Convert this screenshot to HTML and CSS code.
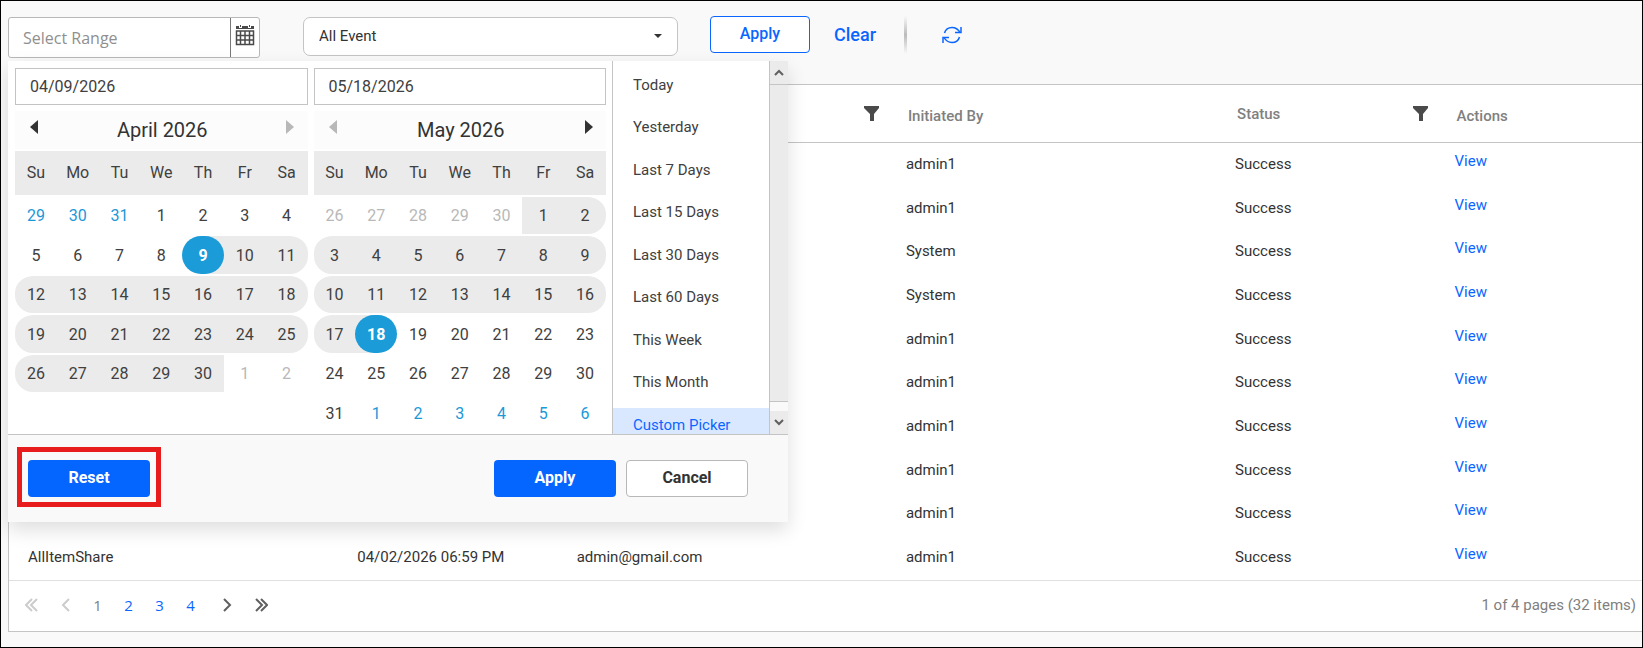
FILE: index.html
```html
<!DOCTYPE html>
<html lang="en">
<head>
    <meta charset="UTF-8">
    <meta name="viewport" content="width=device-width, initial-scale=1.0">
    <title>Export Logs</title>
    <link rel="stylesheet" href="styles.css">
</head>
<body>
    <div class="page">
        <div class="toolbar">
            <div class="range">
                <input type="text" class="range-input" placeholder="Select Range" aria-label="Select Range">
                <button type="button" class="range-button" aria-label="Open calendar">
                    <svg width="20" height="22" viewBox="0 0 20 22">
                        <path d="M1 5V2h3v2h3V2h6v2h3V2h3v3z" fill="#4a4a4a"/>
                        <path d="M5.500 1v2M14.500 1v2" stroke="#4a4a4a" stroke-width="1"/>
                        <path d="M1.500 7h17v13.500h-17zM1.500 11.500h17M1.500 16h17M5.500 7v13M10 7v13M14.500 7v13" fill="none" stroke="#4a4a4a" stroke-width="1.500"/>
                    </svg>
                </button>

                <!-- Date range popup -->
                <div class="popup">
                    <div class="popup-main">
                        <div class="calendars">
                            <div class="calendar">
                                <input type="text" class="date-input" value="04/09/2026" aria-label="Start date">
                                <div class="calendar-nav">
                                    <button type="button" class="arrow" aria-label="Previous month"><svg width="8" height="14" viewBox="0 0 8 14"><path d="M8 0v14L0 7z"/></svg></button>
                                    <span>April 2026</span>
                                    <button type="button" class="arrow" aria-label="Next month" disabled><svg width="8" height="14" viewBox="0 0 8 14"><path d="M0 0v14l8-7z"/></svg></button>
                                </div>
                                <table class="days" id="startMonth"></table>
                            </div>
                            <div class="calendar">
                                <input type="text" class="date-input" value="05/18/2026" aria-label="End date">
                                <div class="calendar-nav">
                                    <button type="button" class="arrow" aria-label="Previous month" disabled><svg width="8" height="14" viewBox="0 0 8 14"><path d="M8 0v14L0 7z"/></svg></button>
                                    <span>May 2026</span>
                                    <button type="button" class="arrow" aria-label="Next month"><svg width="8" height="14" viewBox="0 0 8 14"><path d="M0 0v14l8-7z"/></svg></button>
                                </div>
                                <table class="days" id="endMonth"></table>
                            </div>
                        </div>
                        <div class="presets">
                            <button type="button">Today</button>
                            <button type="button">Yesterday</button>
                            <button type="button">Last 7 Days</button>
                            <button type="button">Last 15 Days</button>
                            <button type="button">Last 30 Days</button>
                            <button type="button">Last 60 Days</button>
                            <button type="button">This Week</button>
                            <button type="button">This Month</button>
                            <button type="button" class="active">Custom Picker</button>
                        </div>
                        <div class="scroll">
                            <button type="button" class="scroll-up" aria-label="Scroll up"><svg width="10" height="7" viewBox="0 0 10 7"><path d="M1 6l4-4 4 4"/></svg></button>
                            <div class="scroll-thumb"></div>
                            <button type="button" class="scroll-down" aria-label="Scroll down"><svg width="10" height="7" viewBox="0 0 10 7"><path d="M1 1l4 4 4-4"/></svg></button>
                        </div>
                    </div>
                    <div class="popup-footer">
                        <div class="highlight">
                            <button type="button" class="btn btn-primary">Reset</button>
                        </div>
                        <div class="popup-actions">
                            <button type="button" class="btn btn-primary">Apply</button>
                            <button type="button" class="btn btn-cancel">Cancel</button>
                        </div>
                    </div>
                </div>
            </div>

            <div class="event">
                <select class="event-select" aria-label="Event">
                    <option>All Event</option>
                </select>
                <svg class="event-caret" width="8" height="4" viewBox="0 0 8 4"><path d="M0 0h8L4 4z" fill="#333"/></svg>
            </div>

            <button type="button" class="btn-apply">Apply</button>
            <button type="button" class="btn-clear">Clear</button>
            <span class="divider"></span>
            <button type="button" class="btn-refresh" aria-label="Refresh">
                <svg width="20" height="18" viewBox="0 0 20 18" fill="none" stroke="#0a66ff" stroke-width="1.500">
                    <path d="M2.500 7C3.500 3.500 6.500 1.500 10 1.500c3.500 0 6 1.500 8 5M17.500 11c-1 3.500-4 5.500-7.500 5.500-3.500 0-6-1.500-8-5"/>
                    <path d="M19 1v5.500h-6M1 17v-5.500h6"/>
                </svg>
            </button>
        </div>

        <div class="grid">
            <table class="logs">
                <colgroup>
                    <col class="wide"><col class="narrow"><col class="wide"><col class="wide"><col class="narrow"><col>
                </colgroup>
                <thead>
                    <tr>
                        <th></th>
                        <th></th>
                        <th><div class="th-filter"><span></span><svg width="15" height="15" viewBox="0 0 15 15"><path d="M0 0h15v2L10 8v7H6V8L0 2z" fill="#4a4a4a"/></svg></div></th>
                        <th>Initiated By</th>
                        <th><div class="th-filter"><span>Status</span><svg width="15" height="15" viewBox="0 0 15 15"><path d="M0 0h15v2L10 8v7H6V8L0 2z" fill="#4a4a4a"/></svg></div></th>
                        <th>Actions</th>
                    </tr>
                </thead>
                <tbody>
                    <tr><td></td><td></td><td></td><td>admin1</td><td>Success</td><td><a href="#">View</a></td></tr>
                    <tr><td></td><td></td><td></td><td>admin1</td><td>Success</td><td><a href="#">View</a></td></tr>
                    <tr><td></td><td></td><td></td><td>System</td><td>Success</td><td><a href="#">View</a></td></tr>
                    <tr><td></td><td></td><td></td><td>System</td><td>Success</td><td><a href="#">View</a></td></tr>
                    <tr><td></td><td></td><td></td><td>admin1</td><td>Success</td><td><a href="#">View</a></td></tr>
                    <tr><td></td><td></td><td></td><td>admin1</td><td>Success</td><td><a href="#">View</a></td></tr>
                    <tr><td></td><td></td><td></td><td>admin1</td><td>Success</td><td><a href="#">View</a></td></tr>
                    <tr><td></td><td></td><td></td><td>admin1</td><td>Success</td><td><a href="#">View</a></td></tr>
                    <tr><td></td><td></td><td></td><td>admin1</td><td>Success</td><td><a href="#">View</a></td></tr>
                    <tr><td>AllItemShare</td><td>04/02/2026 06:59 PM</td><td>admin@gmail.com</td><td>admin1</td><td>Success</td><td><a href="#">View</a></td></tr>
                </tbody>
            </table>

            <div class="pager">
                <div class="pager-links">
                    <button type="button" class="pager-nav" aria-label="First page" disabled><svg width="13" height="14" viewBox="0 0 13 14"><path d="M7 1L1 7l6 6M12 1L6 7l6 6"/></svg></button>
                    <button type="button" class="pager-nav" aria-label="Previous page" disabled><svg width="13" height="14" viewBox="0 0 13 14"><path d="M10 1L4 7l6 6"/></svg></button>
                    <div class="pager-pages">
                        <span class="pager-page">1</span>
                        <a href="#" class="pager-page">2</a>
                        <a href="#" class="pager-page">3</a>
                        <a href="#" class="pager-page">4</a>
                    </div>
                    <button type="button" class="pager-nav" aria-label="Next page"><svg width="13" height="14" viewBox="0 0 13 14"><path d="M3 1l6 6-6 6"/></svg></button>
                    <button type="button" class="pager-nav" aria-label="Last page"><svg width="13" height="14" viewBox="0 0 13 14"><path d="M1 1l6 6-6 6M6 1l6 6-6 6"/></svg></button>
                </div>
                <span class="pager-info">1 of 4 pages (32 items)</span>
            </div>
        </div>
    </div>

    <script>
        const start = new Date(2026, 3, 9);
        const end = new Date(2026, 4, 18);

        // side: 'start' is the left calendar, 'end' the right one
        function renderMonth(id, year, month, side) {
            const table = document.getElementById(id);
            const first = new Date(year, month, 1);
            const last = new Date(year, month + 1, 0);
            const weeks = Math.ceil((first.getDay() + last.getDate()) / 7);

            let html = '<thead><tr>';
            ['Su', 'Mo', 'Tu', 'We', 'Th', 'Fr', 'Sa'].forEach(name => {
                html += `<th scope="col">${name}</th>`;
            });
            html += '</tr></thead><tbody>';

            for (let w = 0; w < weeks; w++) {
                html += '<tr>';
                for (let d = 0; d < 7; d++) {
                    const day = new Date(year, month, 1 - first.getDay() + w * 7 + d);
                    let cls = '';
                    if (day < first) {
                        cls = side === 'start' ? 'other' : 'off';
                    } else if (day > last) {
                        cls = side === 'start' ? 'off' : 'other';
                    } else if (day.getTime() === start.getTime()) {
                        cls = 'range-start';
                    } else if (day.getTime() === end.getTime()) {
                        cls = 'range-end';
                    } else if (day > start && day < end) {
                        cls = 'in-range';
                    }
                    html += `<td class="${cls}"><button type="button">${day.getDate()}</button></td>`;
                }
                html += '</tr>';
            }
            table.innerHTML = html + '</tbody>';
        }

        renderMonth('startMonth', 2026, 3, 'start');
        renderMonth('endMonth', 2026, 4, 'end');
    </script>
</body>
</html>
```
FILE: styles.css
```css
* {
    box-sizing: border-box;
}

body {
    margin: 0;
    font-family: Roboto, Arial, sans-serif;
    font-size: 15px;
    color: #333;
}

button, input, select {
    font-family: inherit;
    font-size: inherit;
    color: inherit;
}

button {
    margin: 0;
    padding: 0;
    border: none;
    background: none;
    cursor: pointer;
}

svg {
    display: block;
}

a {
    color: #0a66ff;
    text-decoration: none;
}

.page {
    min-height: 100vh;
    padding-left: 7px;
    border: 1px solid #000;
    background-color: #f9f9f9;
}

/* Toolbar */
.toolbar {
    display: flex;
    align-items: flex-start;
    height: 83px;
    padding-top: 15px;
}

.range {
    position: relative;
    display: flex;
    width: 252px;
    height: 41px;
    margin: 1px 43px 0 0;
    border: 1px solid #b8b8b8;
    border-radius: 3px;
    background-color: #fff;
}

.range-input {
    flex: 1;
    min-width: 0;
    padding: 0 14px;
    border: none;
    background: none;
    font-family: "Open Sans", "Noto Sans", sans-serif;
    font-size: 16px;
}

.range-input::placeholder {
    color: #8f8f8f;
    opacity: 1;
}

.range-button {
    display: flex;
    justify-content: center;
    width: 29px;
    padding-top: 6px;
    border-left: 1px solid #777;
}

.event {
    position: relative;
    width: 375px;
    margin: 1px 32px 0 0;
}

.event-select {
    width: 100%;
    height: 39px;
    padding: 0 15px 2px;
    border: 1px solid #c4c4c4;
    border-radius: 7px;
    background-color: #fff;
    appearance: none;
}

.event-caret {
    position: absolute;
    top: 17px;
    right: 16px;
    pointer-events: none;
}

.btn-apply {
    width: 100px;
    height: 37px;
    margin-right: 24px;
    padding-bottom: 2px;
    border: 1px solid #0a66ff;
    border-radius: 4px;
    background-color: #fff;
    color: #0a66ff;
    font-size: 16px;
    font-weight: 500;
}

.btn-clear {
    height: 37px;
    color: #0a66ff;
    font-size: 18px;
    font-weight: 500;
}

.divider {
    width: 3px;
    height: 38px;
    margin: 0 35px 0 28px;
    background: linear-gradient(#f9f9f9, #bbb, #f9f9f9);
}

.btn-refresh {
    display: flex;
    align-items: center;
    height: 37px;
}

/* Date range popup */
.popup {
    position: absolute;
    z-index: 10;
    top: 43px;
    left: -1px;
    width: 780px;
    background-color: #fff;
    box-shadow: 0 8px 18px rgba(0, 0, 0, 0.13);
}

.popup-main {
    display: flex;
    height: 374px;
    border-bottom: 1px solid #c4c4c4;
}

.calendars {
    display: flex;
    flex: 1;
    gap: 6px;
    padding: 7px 6px 0 7px;
}

.calendar {
    flex: 1;
}

.date-input {
    display: block;
    width: 100%;
    height: 37px;
    padding: 0 14px;
    border: 1px solid #c4c4c4;
    background-color: #fff;
    color: #404040;
    font-size: 16px;
}

.calendar-nav {
    display: flex;
    align-items: center;
    justify-content: space-between;
    height: 38px;
    margin: 6px 0 2px;
    padding: 0 13px 0 15px;
    background-color: #fcfcfc;
    font-size: 20px;
}

.arrow {
    padding-bottom: 6px;
    fill: #333;
}

.arrow:disabled {
    fill: #b8b8b8;
    cursor: default;
}

.days {
    width: 100%;
    table-layout: fixed;
    border-collapse: separate;
    border-spacing: 0;
    color: #404040;
    font-size: 16px;
}

.days th {
    height: 44px;
    padding: 0 0 2px;
    background-color: #ebebeb;
    font-weight: 400;
}

.days td {
    height: 39px;
    padding: 0;
    border-top: 2px solid #fff;
    background-clip: padding-box;
}

.days tr:nth-child(even) td {
    height: 40px;
}

.days td button {
    display: block;
    width: 100%;
    height: 37px;
}

.days .other {
    color: #1b98d8;
}

.days .off {
    color: #b8b8b8;
}

.days .in-range {
    background-color: #ebebeb;
}

.days td:first-child {
    border-radius: 18px 0 0 18px;
}

.days td:last-child {
    border-radius: 0 18px 18px 0;
}

.days .range-start {
    background-image: linear-gradient(to right, #fff 50%, #ebebeb 50%);
}

.days .range-end {
    background-image: linear-gradient(to left, #fff 50%, #ebebeb 50%);
}

.days .range-start button,
.days .range-end button {
    height: 38px;
    border-radius: 19px;
    background-color: #1b9bd8;
    color: #fff;
    font-weight: 700;
}

.presets {
    width: 157px;
    padding-top: 7px;
    border-left: 1px solid #c4c4c4;
    overflow: hidden;
}

.presets button {
    display: block;
    width: 100%;
    height: 34px;
    margin-bottom: 8px;
    padding-left: 20px;
    color: #404040;
    text-align: left;
}

.presets button:nth-child(even) {
    margin-bottom: 9px;
}

.presets .active {
    background-color: #dae8ff;
    color: #0a66ff;
}

.scroll {
    display: flex;
    flex-direction: column;
    width: 19px;
    border-left: 1px solid #c4c4c4;
    background-color: #f9f9f9;
}

.scroll svg {
    fill: none;
    stroke: #606060;
    stroke-width: 2;
}

.scroll-up, .scroll-down {
    display: flex;
    align-items: center;
    justify-content: center;
    height: 23px;
    background-color: #ebebeb;
}

.scroll-thumb {
    flex: 1;
    margin-bottom: 9px;
    border: solid #c4c4c4;
    border-width: 1px 0;
    background-color: #ebebeb;
}

.popup-footer {
    display: flex;
    align-items: flex-start;
    justify-content: space-between;
    padding: 12px 40px 15px 9px;
    background-color: #f9f9f9;
}

/* Red frame around the reset button */
.highlight {
    padding: 8px 6px 5px;
    border: 5px solid #e81c1c;
}

.popup-actions {
    display: flex;
    gap: 10px;
    padding-top: 13px;
}

.btn {
    display: block;
    width: 122px;
    height: 37px;
    padding-bottom: 2px;
    border-radius: 4px;
    font-size: 16px;
    font-weight: 700;
}

.btn-primary {
    background-color: #0565ff;
    color: #fff;
}

.btn-cancel {
    border: 1px solid #b8b8b8;
    background-color: #fff;
}

/* Log grid */
.grid {
    border: 1px solid #c4c4c4;
    border-right: none;
    background-color: #fff;
}

.logs {
    width: 100%;
    table-layout: fixed;
    border-collapse: separate;
    border-spacing: 0;
}

.wide {
    width: 20.16%;
}

.narrow {
    width: 13.44%;
}

.logs th {
    height: 58px;
    padding: 4px 8px 0 21px;
    border-bottom: 1px solid #c4c4c4;
    color: #808080;
    font-weight: 500;
    text-align: left;
}

.th-filter {
    display: flex;
    align-items: center;
    justify-content: space-between;
    padding-bottom: 4px;
}

.logs td {
    height: 44px;
    padding: 0 0 2px 19px;
}

.logs tbody tr:nth-child(3n+2) td {
    height: 43px;
}

.logs td:last-child {
    padding-bottom: 8px;
}

.pager {
    display: flex;
    align-items: center;
    justify-content: space-between;
    height: 51px;
    padding: 0 6px 2px 5px;
    border-top: 1px solid #e0e0e0;
}

.pager-links {
    display: flex;
    align-items: center;
}

.pager-pages {
    display: flex;
    margin-right: 4px;
}

.pager-page {
    width: 31px;
    text-align: center;
    color: #808080;
    font-family: "Open Sans", "Noto Sans", sans-serif;
}

a.pager-page {
    color: #0a66ff;
}

.pager-nav {
    display: flex;
    justify-content: center;
    width: 34px;
    fill: none;
    stroke: #606060;
    stroke-width: 2;
}

.pager-nav:disabled {
    stroke: #ccc;
    cursor: default;
}

.pager-info {
    color: #808080;
}
```
